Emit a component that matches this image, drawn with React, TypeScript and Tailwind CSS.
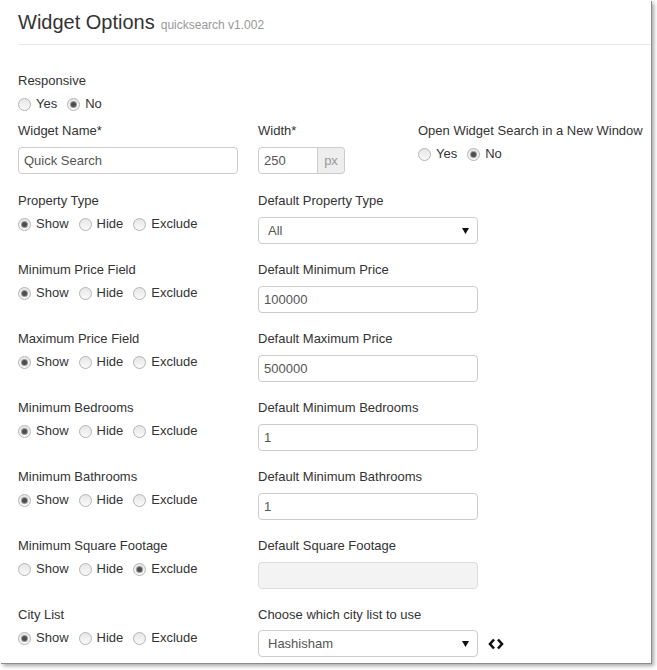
import React from "react";

type Choice = "Show" | "Hide" | "Exclude";

const Radio = ({ checked, label }: { checked?: boolean; label: string }) => (
  <label className="flex items-center gap-[5px] mr-[10px]">
    <span className="w-[13px] h-[13px] rounded-full border border-[#b4b4b4] bg-gradient-to-b from-[#e6e6e6] to-[#fafafa] flex items-center justify-center">
      {checked && <span className="w-[5px] h-[5px] rounded-full bg-[#4d4d4d] ring-1 ring-[#9a9a9a]" />}
    </span>
    <span>{label}</span>
  </label>
);

const Label = ({ children }: { children: React.ReactNode }) => (
  <div className="h-[18px] leading-[18px]">{children}</div>
);

const ShowHide = ({ value }: { value: Choice }) => (
  <div className="flex items-center h-[18px] mt-[5px]">
    <Radio label="Show" checked={value === "Show"} />
    <Radio label="Hide" checked={value === "Hide"} />
    <Radio label="Exclude" checked={value === "Exclude"} />
  </div>
);

const TextInput = ({ value, disabled }: { value?: string; disabled?: boolean }) => (
  <div
    className={
      "mt-[7px] w-[220px] h-[27px] rounded-[4px] border px-[5px] leading-[25px] text-[#555] " +
      (disabled ? "bg-[#f3f3f3] border-[#dcdcdc]" : "bg-white border-[#cccccc]")
    }
  >
    {value}
  </div>
);

const Select = ({ value }: { value: string }) => (
  <div className="w-[220px] h-[27px] rounded-[4px] border border-[#cccccc] bg-white pl-[9px] pr-[8px] flex items-center justify-between text-[#555]">
    <span>{value}</span>
    <svg width="7" height="6" viewBox="0 0 7 6">
      <path d="M0 0 L7 0 L3.5 6 Z" fill="#111" />
    </svg>
  </div>
);

const rows: { left: string; choice: Choice; right: string; control: React.ReactNode }[] = [
  {
    left: "Property Type",
    choice: "Show",
    right: "Default Property Type",
    control: (
      <div className="mt-[7px]">
        <Select value="All" />
      </div>
    ),
  },
  { left: "Minimum Price Field", choice: "Show", right: "Default Minimum Price", control: <TextInput value="100000" /> },
  { left: "Maximum Price Field", choice: "Show", right: "Default Maximum Price", control: <TextInput value="500000" /> },
  { left: "Minimum Bedrooms", choice: "Show", right: "Default Minimum Bedrooms", control: <TextInput value="1" /> },
  { left: "Minimum Bathrooms", choice: "Show", right: "Default Minimum Bathrooms", control: <TextInput value="1" /> },
  { left: "Minimum Square Footage", choice: "Exclude", right: "Default Square Footage", control: <TextInput disabled /> },
];

export default function App() {
  return (
    <div className="w-[657px] h-[670px] bg-white">
      <div
        className="w-[651px] h-[663px] bg-white pl-[18px] text-[13px] text-[#333] shadow-[1px_1px_0_#8c8c8c,3px_3px_4px_rgba(0,0,0,0.35)] overflow-hidden"
        style={{ fontFamily: '"Liberation Sans", Arial, sans-serif' }}
      >
        <div className="h-[45px] pt-[9px] border-b border-[#e8e8e8] flex items-baseline gap-[6px]">
          <span className="text-[20px] leading-[26px]">Widget Options</span>
          <span className="text-[12px] text-[#999]">quicksearch v1.002</span>
        </div>

        <div className="mt-[27px]">
          <Label>Responsive</Label>
          <div className="flex items-center h-[18px] mt-[5px]">
            <Radio label="Yes" />
            <Radio label="No" checked />
          </div>
        </div>

        <div className="mt-[9px] grid grid-cols-[240px_160px_auto] items-start">
          <div>
            <Label>Widget Name*</Label>
            <TextInput value="Quick Search" />
          </div>
          <div>
            <Label>Width*</Label>
            <div className="mt-[7px] flex h-[27px] text-[#555]">
              <div className="w-[60px] border border-[#ccc] rounded-l-[4px] px-[5px] leading-[25px]">250</div>
              <div className="w-[27px] border border-l-0 border-[#ccc] rounded-r-[4px] bg-[#eeeeee] text-[#999] text-center leading-[25px]">
                px
              </div>
            </div>
          </div>
          <div>
            <Label>Open Widget Search in a New Window</Label>
            <div className="flex items-center h-[18px] mt-[5px]">
              <Radio label="Yes" />
              <Radio label="No" checked />
            </div>
          </div>
        </div>

        {rows.map((r, i) => (
          <div
            key={r.left}
            className={(i === 0 ? "mt-[18px]" : "mt-[17px]") + " grid grid-cols-[240px_auto] items-start"}
          >
            <div>
              <Label>{r.left}</Label>
              <ShowHide value={r.choice} />
            </div>
            <div>
              <Label>{r.right}</Label>
              {r.control}
            </div>
          </div>
        ))}

        <div className="mt-[17px] grid grid-cols-[240px_auto] items-start">
          <div>
            <Label>City List</Label>
            <ShowHide value="Show" />
          </div>
          <div>
            <Label>Choose which city list to use</Label>
            <div className="mt-[6px] flex items-center gap-[10px]">
              <Select value="Hashisham" />
              <svg width="16" height="12" viewBox="0 0 16 12">
                <path d="M6 1.5 L2 6 L6 10.5" fill="none" stroke="#111" strokeWidth="2.6" />
                <path d="M10 1.5 L14 6 L10 10.5" fill="none" stroke="#111" strokeWidth="2.6" />
              </svg>
            </div>
          </div>
        </div>
      </div>
    </div>
  );
}
